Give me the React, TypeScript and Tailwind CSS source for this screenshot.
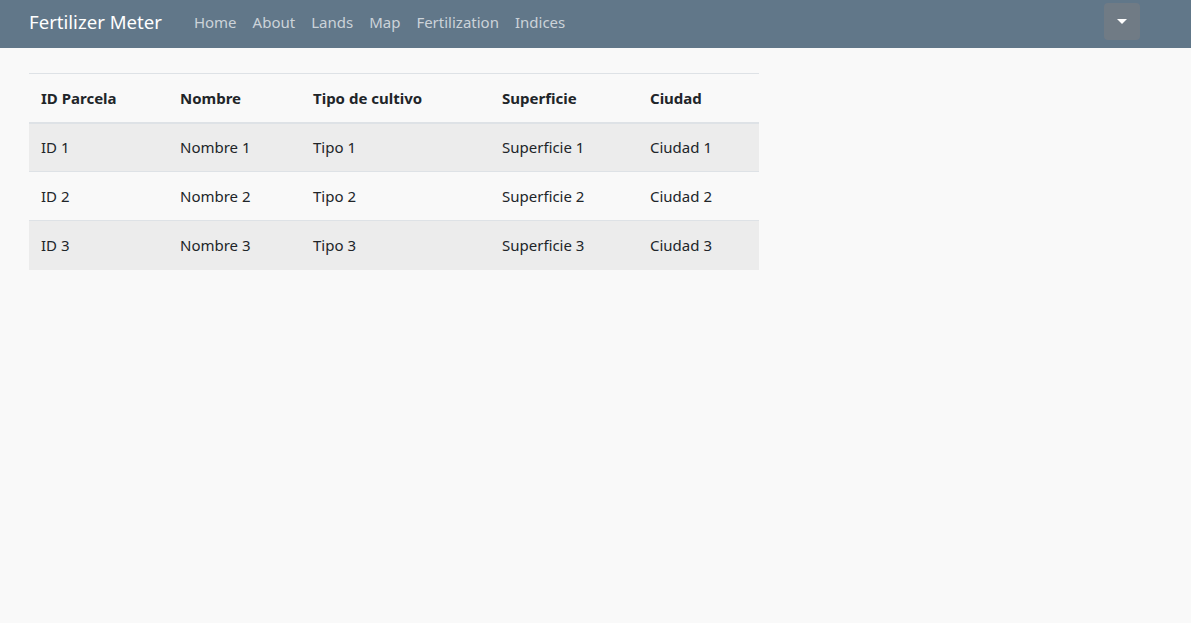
import React from "react";

const rows = [1, 2, 3];

export default function App() {
  const font = { fontFamily: '"Segoe UI", "Noto Sans", sans-serif' };
  return (
    <div className="min-h-[623px] w-full bg-[#f9f9f9] text-[#212529]" style={font}>
      <nav className="flex h-[48px] items-center bg-[#617789] pb-[5px] pl-[29px] pr-[51px]">
        <span className="mr-[24px] text-[18.6px] leading-[30px] text-white">Fertilizer Meter</span>
        <div className="flex items-center text-[15px] text-[#ccd3d9]">
          {["Home", "About", "Lands", "Map", "Fertilization", "Indices"].map((l) => (
            <span key={l} className="px-[8px] leading-[24px]">{l}</span>
          ))}
        </div>
        <div className="ml-auto flex h-[37px] w-[36px] items-center justify-center rounded-[4px] bg-[#707b85]">
          <span className="block h-0 w-0 border-x-[5px] border-t-[5px] border-x-transparent border-t-white" />
        </div>
      </nav>
      <div className="pl-[29px] pt-[25px]">
        <table className="w-[730px] table-fixed border-collapse text-[15px]">
          <thead>
            <tr className="border-t border-[#dee2e6]">
              <th className="h-[49px] w-[139px] border-b-2 border-[#dee2e6] px-[12px] text-left font-bold">ID Parcela</th>
              <th className="w-[133px] border-b-2 border-[#dee2e6] px-[12px] text-left font-bold">Nombre</th>
              <th className="w-[189px] border-b-2 border-[#dee2e6] px-[12px] text-left font-bold">Tipo de cultivo</th>
              <th className="w-[148px] border-b-2 border-[#dee2e6] px-[12px] text-left font-bold">Superficie</th>
              <th className="w-[121px] border-b-2 border-[#dee2e6] px-[12px] text-left font-bold">Ciudad</th>
            </tr>
          </thead>
          <tbody>
            {rows.map((n) => (
              <tr key={n} className={`border-t border-[#dee2e6] ${n % 2 === 1 ? "bg-[#ececec]" : ""}`}>
                <td className="h-[49px] px-[12px]">ID {n}</td>
                <td className="px-[12px]">Nombre {n}</td>
                <td className="px-[12px]">Tipo {n}</td>
                <td className="px-[12px]">Superficie {n}</td>
                <td className="px-[12px]">Ciudad {n}</td>
              </tr>
            ))}
          </tbody>
        </table>
      </div>
    </div>
  );
}
